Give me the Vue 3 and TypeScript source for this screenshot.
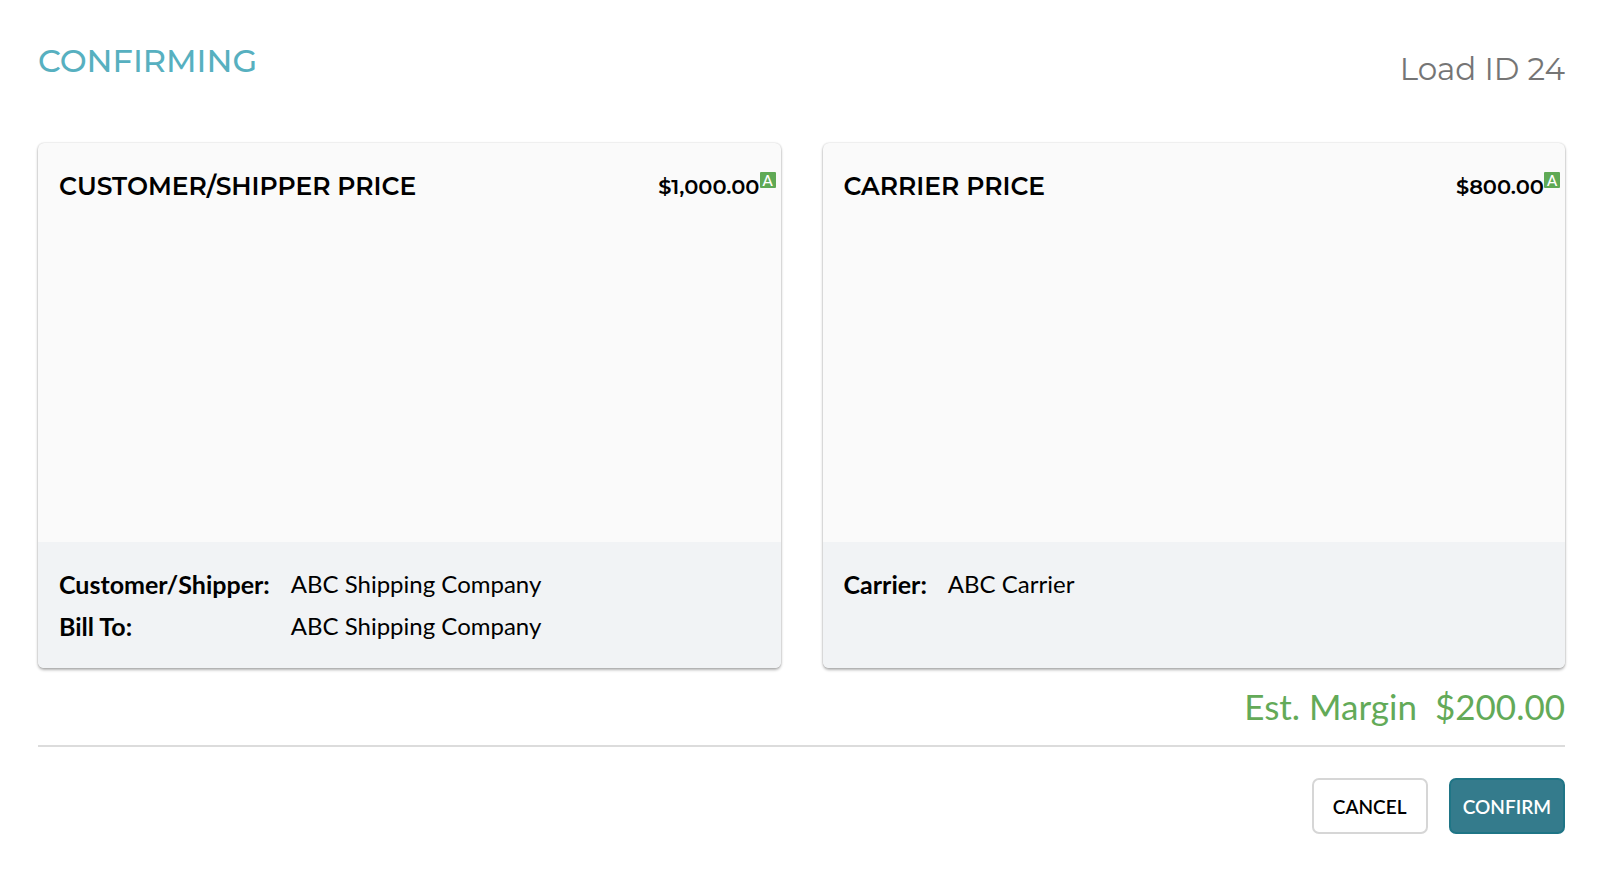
<script setup lang="ts">
interface Party {
  label: string
  name: string
}

interface PriceCard {
  title: string
  amount: string
  parties: Party[]
}

const loadId = 24
const cards: PriceCard[] = [
  {
    title: 'CUSTOMER/SHIPPER PRICE',
    amount: '$1,000.00',
    parties: [
      { label: 'Customer/Shipper:', name: 'ABC Shipping Company' },
      { label: 'Bill To:', name: 'ABC Shipping Company' },
    ],
  },
  {
    title: 'CARRIER PRICE',
    amount: '$800.00',
    parties: [{ label: 'Carrier:', name: 'ABC Carrier' }],
  },
]
const margin = '$200.00'
</script>

<template>
  <main class="confirm">
    <header class="top">
      <h1 class="title">CONFIRMING</h1>
      <p class="load">Load ID {{ loadId }}</p>
    </header>

    <div class="cards">
      <section v-for="card in cards" :key="card.title" class="card">
        <div class="card-body">
          <h2 class="card-title">{{ card.title }}</h2>
          <div class="price">
            <span class="amount">{{ card.amount }}</span>
            <span class="badge">A</span>
          </div>
        </div>
        <dl class="parties">
          <template v-for="party in card.parties" :key="party.label">
            <dt>{{ party.label }}</dt>
            <dd>{{ party.name }}</dd>
          </template>
        </dl>
      </section>
    </div>

    <p class="margin">
      <span>Est. Margin</span>
      <span>{{ margin }}</span>
    </p>

    <footer class="actions">
      <button type="button" class="btn">CANCEL</button>
      <button type="button" class="btn primary">CONFIRM</button>
    </footer>
  </main>
</template>

<style>
body {
  margin: 0;
  background: #fff;
}
</style>

<style scoped>
.confirm {
  box-sizing: border-box;
  padding: 41px 35px 40px 38px;
  font-family: Lato, sans-serif;
  color: #000;
}

.top {
  display: flex;
  justify-content: space-between;
  height: 102px;
}

.title,
.load {
  margin: 0;
  font-family: Montserrat, Inter, sans-serif;
  line-height: 40px;
}

.title {
  color: #57b0c0;
  font-size: 32px;
  font-weight: 500;
}

.load {
  padding-top: 8px;
  color: #757575;
  font-size: 31px;
  font-weight: 400;
}

.cards {
  display: grid;
  grid-template-columns: 1fr 1fr;
  gap: 42px;
}

.card {
  display: flex;
  flex-direction: column;
  overflow: hidden;
  border-radius: 6px;
  background: #fafafa;
  box-shadow: 0 2px 3px rgba(0, 0, 0, 0.3), 0 0 2px rgba(0, 0, 0, 0.2);
}

.card-body {
  display: flex;
  justify-content: space-between;
  min-height: 370px;
  padding: 29px 5px 0 21px;
}

.card-title {
  margin: 0;
  font-family: Montserrat, Inter, sans-serif;
  font-size: 25px;
  font-weight: 600;
  line-height: 28px;
}

.price {
  display: flex;
  align-items: flex-start;
}

.amount {
  font-family: Montserrat, Inter, sans-serif;
  font-size: 21px;
  font-weight: 600;
  line-height: 30px;
}

.badge {
  width: 16px;
  border-radius: 1px;
  background: #5fa955;
  color: #fff;
  font-size: 15px;
  font-weight: 500;
  line-height: 16px;
  text-align: center;
}

.parties {
  display: grid;
  flex: 1;
  grid-template-columns: max-content 1fr;
  align-content: start;
  column-gap: 21px;
  margin: 0;
  padding: 21px;
  background: #f1f3f5;
  font-size: 25px;
  line-height: 42px;
}

.parties dt {
  font-weight: 700;
}

.parties dd {
  margin: 0;
  font-size: 24px;
}

.margin {
  display: flex;
  justify-content: flex-end;
  gap: 18px;
  margin: 0;
  padding: 16px 0 17px;
  border-bottom: 2px solid #dcdcdc;
  color: #63aa58;
  font-size: 35px;
  line-height: 44px;
}

.actions {
  display: flex;
  justify-content: flex-end;
  gap: 21px;
  padding-top: 31px;
}

.btn {
  box-sizing: border-box;
  min-width: 116px;
  height: 56px;
  padding: 0 12px;
  border: 2px solid #d6d6d6;
  border-radius: 7px;
  background: #fff;
  color: #000;
  font-family: Lato, sans-serif;
  font-size: 19px;
  font-weight: 600;
  cursor: pointer;
}

.primary {
  border-color: #1f7586;
  background: #347b8c;
  color: #fff;
}
</style>
